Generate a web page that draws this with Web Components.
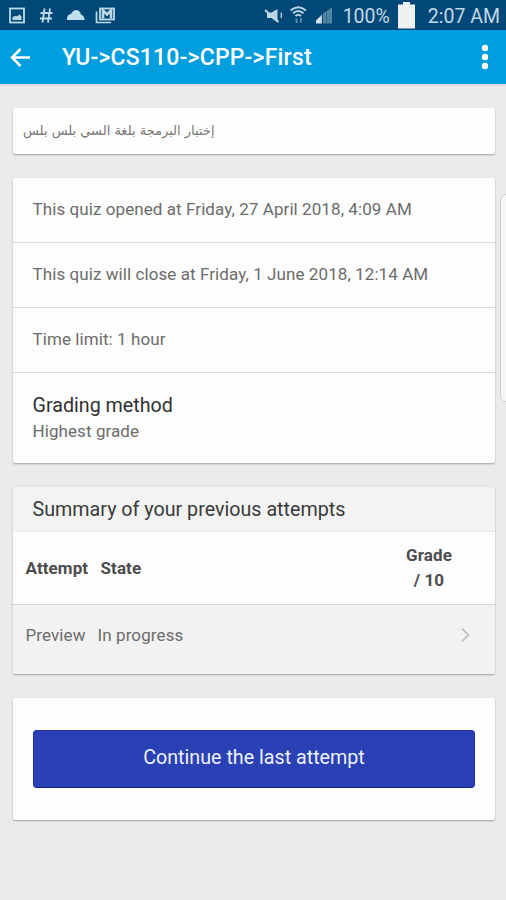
<!DOCTYPE html>
<html lang="en">
<head>
<meta charset="utf-8">
<title>Quiz</title>
<style>
  body {
    margin: 0;
    height: 900px;
    overflow: hidden;
    background: #ebebeb;
    font-family: Roboto, "Noto Sans", "DejaVu Sans", sans-serif;
    color: #6c6c6c;
  }
</style>
</head>
<body>
<quiz-page>
  <status-bar slot="status" battery="100%" time="2:07 AM"></status-bar>
  <app-bar slot="bar">YU-&gt;CS110-&gt;CPP-&gt;First</app-bar>

  <quiz-card><intro-text>إختبار البرمجة بلغة السي بلس بلس</intro-text></quiz-card>

  <quiz-card>
    <info-item>This quiz opened at Friday, 27 April 2018, 4:09 AM</info-item>
    <info-item>This quiz will close at Friday, 1 June 2018, 12:14 AM</info-item>
    <info-item>Time limit: 1 hour</info-item>
    <info-item style="--h: 90px"><span slot="title">Grading method</span>Highest grade</info-item>
  </quiz-card>

  <quiz-card>
    <attempt-table>
      <span slot="heading">Summary of your previous attempts</span>
      <span slot="attempt">Preview</span>
      <span slot="state">In progress</span>
    </attempt-table>
  </quiz-card>

  <quiz-card><action-button>Continue the last attempt</action-button></quiz-card>
  <edge-handle slot="overlay"></edge-handle>
</quiz-page>

<script>
class QuizPage extends HTMLElement {
  constructor() {
    super();
    this.attachShadow({ mode: "open" });
    this.shadowRoot.innerHTML = `
      <style>
        :host { display: block; position: relative; height: 900px; overflow: hidden; }
        main { display: flex; flex-direction: column; gap: 24px; padding: 24px 11px 0 13px; }
      </style>
      <slot name="status"></slot>
      <slot name="bar"></slot>
      <main><slot></slot></main>
      <slot name="overlay"></slot>
    `;
  }
}
customElements.define("quiz-page", QuizPage);

class StatusBar extends HTMLElement {
  constructor() {
    super();
    this.attachShadow({ mode: "open" });
    this.render();
  }

  render() {
    this.shadowRoot.innerHTML = `
      <style>
        :host { display: flex; align-items: center; height: 30px; box-sizing: border-box; padding: 0 6px 0 8px;
                background: #004877; color: #c3d8e6; font-size: 19.500px; line-height: 30px; }
        svg { display: block; flex: none; }
        .space { flex: 1; }
        .battery { margin: 0 13px 0 8px; }
        .level { margin-left: 10px; padding-top: 3px; }
        .time { padding-top: 3px; }
      </style>
      <svg width="108" height="30" viewBox="8 0 108 30" fill="none" stroke="#bdd9e8" stroke-width="1.800">
        <rect x="10" y="8.500" width="14" height="14"/>
        <path d="M12.500 20v-3l2.500-1 2 .3 2.500-1.800 2 2v3.500z" fill="#bdd9e8" stroke="none"/>
        <path d="M44.500 8.500l-2 14M50 8.500l-2 14M40.500 13h12M40 18.500h12"/>
        <path d="M67 20v-2q.5-3.500 4-4q2-4 5.500-4q3.500 .5 4.500 4.500q3 .8 3.500 4v1.500z" fill="#c2dfee" stroke="none"/>
        <path d="M96.500 11.500v11h14.500" stroke-width="1.700"/>
        <rect x="100" y="8.500" width="14" height="11"/>
        <path d="M103 18.500v-8l4 4 4-4v8" stroke-width="2.600"/>
      </svg>
      <span class="space"></span>
      <svg width="70" height="30" viewBox="262 0 70 30" fill="none" stroke="#bdd5e2" stroke-width="1.500">
        <path d="M266 12.500h4.500l6-3.500v13.500l-6-4.500h-4.500z" fill="#bdd5e2" stroke="none"/>
        <path d="M264 10l13.500 12" stroke-width="1.900"/>
        <path d="M280 12.500q1 2.500 0 5.500" stroke-width="1.300"/>
        <path d="M289.500 10.500q7.800-6.500 15.500 0M292 13.300q5.300-4.500 10.500 0M294.500 16q2.800-2.500 5.500 0" stroke-width="2"/>
        <path d="M295.500 23v-4.500M300 18v4.500" stroke="#6292ad" stroke-width="1.800"/>
        <path d="M315 23.500v-3l4-4v7z" fill="#d4e5ee" stroke="none"/>
        <path d="M319 23.500v-7l2-2v9z" fill="#c3d8e4" stroke="none"/>
        <path d="M322 23.500v-10l3-2v12zM325.500 23.500v-12.500l2.500-1.500v14zM328.200 23.500v-14.500l2.800-1.500v16z" fill="#5585a5" stroke="none"/>
      </svg>
      <span class="level">${this.getAttribute("battery") || "100%"}</span>
      <svg class="battery" width="17" height="30" viewBox="0 0 17 30" fill="#eef1f2"><path d="M5 2h7v2.500H17V28.500H0V4.500h5z"/></svg>
      <span class="time">${this.getAttribute("time") || "2:07 AM"}</span>
    `;
  }
}
customElements.define("status-bar", StatusBar);

class AppBar extends HTMLElement {
  constructor() {
    super();
    this.attachShadow({ mode: "open" });
    this.shadowRoot.innerHTML = `
      <style>
        :host { display: flex; align-items: center; height: 54px; box-sizing: border-box; padding: 0 17px 0 10px;
                background: #009ddf; color: #fff; box-shadow: 0 1px 2px rgba(0,0,0,.15); }
        h1 { flex: 1; margin: 2px 0 0 31px; font-size: 23px; font-weight: 500; line-height: 52px; letter-spacing: .18px; white-space: nowrap; }
        svg { display: block; flex: none; }
      </style>
      <svg width="21" height="22" viewBox="0 0 21 22" fill="none" stroke="#fff" stroke-width="2.500"><path d="M20 11.500H2.500M10.500 3L2 11.500l8.500 8.500"/></svg>
      <h1><slot></slot></h1>
      <svg width="8" height="26" viewBox="0 0 8 26" fill="#fff"><circle cx="4" cy="4" r="3.200"/><circle cx="4" cy="13" r="3.200"/><circle cx="4" cy="22" r="3.200"/></svg>
    `;
  }
}
customElements.define("app-bar", AppBar);

class QuizCard extends HTMLElement {
  constructor() {
    super();
    this.attachShadow({ mode: "open" });
    this.shadowRoot.innerHTML = `
      <style>
        :host { display: block; background: #fdfdfd; border-radius: 2px; box-shadow: 0 1px 2px rgba(0,0,0,.32); }
      </style>
      <slot></slot>
    `;
  }
}
customElements.define("quiz-card", QuizCard);

class IntroText extends HTMLElement {
  constructor() {
    super();
    this.attachShadow({ mode: "open" });
    this.shadowRoot.innerHTML = `
      <style>
        :host { display: flex; height: 46px; padding-left: 10px; font-family: "DejaVu Sans", sans-serif; font-size: 13px; line-height: 46px; color: #777; }
      </style>
      <bdi dir="rtl"><slot></slot></bdi>
    `;
  }
}
customElements.define("intro-text", IntroText);

class InfoItem extends HTMLElement {
  constructor() {
    super();
    this.attachShadow({ mode: "open" });
    this.shadowRoot.innerHTML = `
      <style>
        :host { display: flex; flex-direction: column; justify-content: center; height: var(--h, 65px); box-sizing: border-box;
                padding: 0 0 2px 19.500px; font-size: 17px; line-height: 24px; letter-spacing: .08px; white-space: nowrap; }
        :host(:not(:last-child)) { border-bottom: 1px solid #dadada; }
        ::slotted([slot="title"]) { display: block; font-size: 19.700px; line-height: 27px; letter-spacing: 0; color: #303030; }
      </style>
      <slot name="title"></slot>
      <div><slot></slot></div>
    `;
  }
}
customElements.define("info-item", InfoItem);

class AttemptTable extends HTMLElement {
  constructor() {
    super();
    this.attachShadow({ mode: "open" });
    this.shadowRoot.innerHTML = `
      <style>
        :host { display: block; font-size: 17px; letter-spacing: .1px; }
        .heading { height: 44px; padding-left: 19.500px; background: #f3f3f3; border-bottom: 1px solid #e9e9e9;
                   font-size: 19.700px; line-height: 45px; letter-spacing: 0; color: #3a3a3a; border-radius: 2px 2px 0 0; }
        .row { display: flex; align-items: center; box-sizing: border-box; padding: 0 25px 0 12.500px; }
        .head { height: 73px; padding-right: 37px; border-bottom: 1px solid #d5d5d5; font-weight: 700; color: #4c4c4c; }
        .body { height: 69px; padding-bottom: 9px; background: #f2f2f2; border-radius: 0 0 2px 2px; }
        .attempt { width: 75px; }
        .body .attempt { width: 72px; }
        .state { flex: 1; }
        .grade { width: 58px; line-height: 25px; text-align: center; }
        svg { display: block; }
      </style>
      <div class="heading"><slot name="heading"></slot></div>
      <div class="row head"><span class="attempt">Attempt</span><span class="state">State</span><span class="grade">Grade<br>/ 10</span></div>
      <div class="row body">
        <span class="attempt"><slot name="attempt"></slot></span>
        <span class="state"><slot name="state"></slot></span>
        <svg width="9" height="14" viewBox="0 0 9 14" fill="none" stroke="#c4c4c4" stroke-width="2"><path d="M1 .5l6.500 6.500L1 13.500"/></svg>
      </div>
    `;
  }
}
customElements.define("attempt-table", AttemptTable);

class ActionButton extends HTMLElement {
  constructor() {
    super();
    this.attachShadow({ mode: "open" });
    this.shadowRoot.innerHTML = `
      <style>
        :host { display: block; padding: 32px 20px; }
        button { display: block; width: 100%; height: 58px; padding: 0 0 4px; border: 1px solid #1b32a8; border-bottom-color: #10208f; border-radius: 4px;
                 background: #2941b5; color: #eef1ff; font: 19.700px Roboto, sans-serif; }
      </style>
      <button type="button"><slot></slot></button>
    `;
  }
}
customElements.define("action-button", ActionButton);

class EdgeHandle extends HTMLElement {
  constructor() {
    super();
    this.attachShadow({ mode: "open" });
    this.shadowRoot.innerHTML = `
      <style>
        :host { display: block; position: absolute; top: 194px; right: -8px; width: 12px; height: 206px;
                border: 1px solid #cfcfcf; border-radius: 6px; background: #f6f6f6; }
      </style>
    `;
  }
}
customElements.define("edge-handle", EdgeHandle);
</script>
</body>
</html>
